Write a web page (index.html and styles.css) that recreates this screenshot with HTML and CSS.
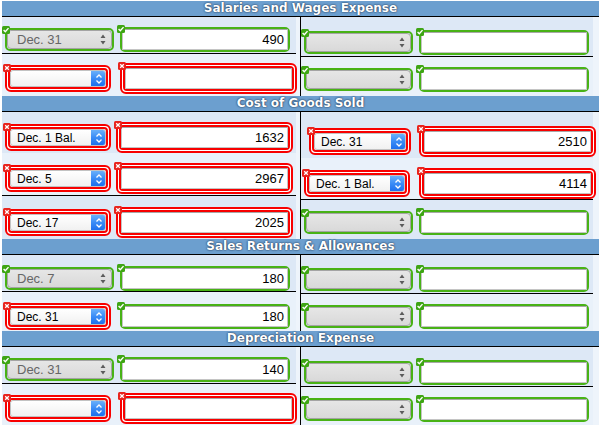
FILE: index.html
```html
<!DOCTYPE html>
<html>
<head>
<meta charset="utf-8">
<link rel="stylesheet" href="styles.css">
</head>
<body>
<div class="page">

  <section class="acct">
    <div class="hd">Salaries and Wages Expense</div>
    <div class="body">
      <div class="half left">
        <div class="row odd h36 pt10"><div class="line">
          <div class="ca"><div class="ok"><svg class="ico" viewBox="0 0 8 8"><rect width="8" height="8" rx="1.5" fill="#3ea514"/><path d="M1.6 4.1 L3.3 5.8 L6.5 2.1" stroke="#fff" stroke-width="1.4" fill="none"/></svg><div class="sel dis"><span>Dec. 31</span><svg class="ud" viewBox="0 0 6 11"><path d="M3 0.5 L5.5 4 L0.5 4 Z M0.5 7 L5.5 7 L3 10.5 Z" fill="#5c5c5c"/></svg></div></div></div>
          <div class="cb"><div class="ok"><svg class="ico" viewBox="0 0 8 8"><rect width="8" height="8" rx="1.5" fill="#3ea514"/><path d="M1.6 4.1 L3.3 5.8 L6.5 2.1" stroke="#fff" stroke-width="1.4" fill="none"/></svg><div class="inp">490</div></div></div>
        </div></div>
        <div class="rule"></div>
        <div class="row even h42 pt9"><div class="line">
          <div class="ca"><div class="bad"><svg class="ico" viewBox="0 0 8 8"><rect width="8" height="8" rx="1.5" fill="#e8231c"/><path d="M2.2 2.2 L5.8 5.8 M5.8 2.2 L2.2 5.8" stroke="#fff" stroke-width="1.3"/></svg><div class="ring"><div class="sel en"><span></span><span class="btn"><svg viewBox="0 0 8 12"><path d="M1.5 4.5 L4 2 L6.5 4.5 M1.5 7.5 L4 10 L6.5 7.5" stroke="#fff" stroke-width="1.3" fill="none"/></svg></span></div></div></div></div>
          <div class="cb"><div class="bad"><svg class="ico" viewBox="0 0 8 8"><rect width="8" height="8" rx="1.5" fill="#e8231c"/><path d="M2.2 2.2 L5.8 5.8 M5.8 2.2 L2.2 5.8" stroke="#fff" stroke-width="1.3"/></svg><div class="ring"><div class="inp"></div></div></div></div>
        </div></div>
      </div>
      <div class="half right">
        <div class="row odd h39 pt13"><div class="line">
          <div class="ca"><div class="ok"><svg class="ico" viewBox="0 0 8 8"><rect width="8" height="8" rx="1.5" fill="#3ea514"/><path d="M1.6 4.1 L3.3 5.8 L6.5 2.1" stroke="#fff" stroke-width="1.4" fill="none"/></svg><div class="sel dis"><span></span><svg class="ud" viewBox="0 0 6 11"><path d="M3 0.5 L5.5 4 L0.5 4 Z M0.5 7 L5.5 7 L3 10.5 Z" fill="#5c5c5c"/></svg></div></div></div>
          <div class="cb"><div class="ok"><svg class="ico" viewBox="0 0 8 8"><rect width="8" height="8" rx="1.5" fill="#3ea514"/><path d="M1.6 4.1 L3.3 5.8 L6.5 2.1" stroke="#fff" stroke-width="1.4" fill="none"/></svg><div class="inp"></div></div></div>
        </div></div>
        <div class="rule"></div>
        <div class="row even h39 pt10"><div class="line">
          <div class="ca"><div class="ok"><svg class="ico" viewBox="0 0 8 8"><rect width="8" height="8" rx="1.5" fill="#3ea514"/><path d="M1.6 4.1 L3.3 5.8 L6.5 2.1" stroke="#fff" stroke-width="1.4" fill="none"/></svg><div class="sel dis"><span></span><svg class="ud" viewBox="0 0 6 11"><path d="M3 0.5 L5.5 4 L0.5 4 Z M0.5 7 L5.5 7 L3 10.5 Z" fill="#5c5c5c"/></svg></div></div></div>
          <div class="cb"><div class="ok"><svg class="ico" viewBox="0 0 8 8"><rect width="8" height="8" rx="1.5" fill="#3ea514"/><path d="M1.6 4.1 L3.3 5.8 L6.5 2.1" stroke="#fff" stroke-width="1.4" fill="none"/></svg><div class="inp"></div></div></div>
        </div></div>
      </div>
    </div>
  </section>

  <section class="acct">
    <div class="hd">Cost of Goods Sold</div>
    <div class="body">
      <div class="half left narrow">
        <div class="row odd h41 pt10"><div class="line">
          <div class="ca"><div class="bad"><svg class="ico" viewBox="0 0 8 8"><rect width="8" height="8" rx="1.5" fill="#e8231c"/><path d="M2.2 2.2 L5.8 5.8 M5.8 2.2 L2.2 5.8" stroke="#fff" stroke-width="1.3"/></svg><div class="ring"><div class="sel en"><span>Dec. 1 Bal.</span><span class="btn"><svg viewBox="0 0 8 12"><path d="M1.5 4.5 L4 2 L6.5 4.5 M1.5 7.5 L4 10 L6.5 7.5" stroke="#fff" stroke-width="1.3" fill="none"/></svg></span></div></div></div></div>
          <div class="cb"><div class="bad"><svg class="ico" viewBox="0 0 8 8"><rect width="8" height="8" rx="1.5" fill="#e8231c"/><path d="M2.2 2.2 L5.8 5.8 M5.8 2.2 L2.2 5.8" stroke="#fff" stroke-width="1.3"/></svg><div class="ring"><div class="inp">1632</div></div></div></div>
        </div></div>
        <div class="row even h42 pt10"><div class="line">
          <div class="ca"><div class="bad"><svg class="ico" viewBox="0 0 8 8"><rect width="8" height="8" rx="1.5" fill="#e8231c"/><path d="M2.2 2.2 L5.8 5.8 M5.8 2.2 L2.2 5.8" stroke="#fff" stroke-width="1.3"/></svg><div class="ring"><div class="sel en"><span>Dec. 5</span><span class="btn"><svg viewBox="0 0 8 12"><path d="M1.5 4.5 L4 2 L6.5 4.5 M1.5 7.5 L4 10 L6.5 7.5" stroke="#fff" stroke-width="1.3" fill="none"/></svg></span></div></div></div></div>
          <div class="cb"><div class="bad"><svg class="ico" viewBox="0 0 8 8"><rect width="8" height="8" rx="1.5" fill="#e8231c"/><path d="M2.2 2.2 L5.8 5.8 M5.8 2.2 L2.2 5.8" stroke="#fff" stroke-width="1.3"/></svg><div class="ring"><div class="inp">2967</div></div></div></div>
        </div></div>
        <div class="rule"></div>
        <div class="row odd h43 pt11"><div class="line">
          <div class="ca"><div class="bad"><svg class="ico" viewBox="0 0 8 8"><rect width="8" height="8" rx="1.5" fill="#e8231c"/><path d="M2.2 2.2 L5.8 5.8 M5.8 2.2 L2.2 5.8" stroke="#fff" stroke-width="1.3"/></svg><div class="ring"><div class="sel en"><span>Dec. 17</span><span class="btn"><svg viewBox="0 0 8 12"><path d="M1.5 4.5 L4 2 L6.5 4.5 M1.5 7.5 L4 10 L6.5 7.5" stroke="#fff" stroke-width="1.3" fill="none"/></svg></span></div></div></div></div>
          <div class="cb"><div class="bad"><svg class="ico" viewBox="0 0 8 8"><rect width="8" height="8" rx="1.5" fill="#e8231c"/><path d="M2.2 2.2 L5.8 5.8 M5.8 2.2 L2.2 5.8" stroke="#fff" stroke-width="1.3"/></svg><div class="ring"><div class="inp">2025</div></div></div></div>
        </div></div>
      </div>
      <div class="half right">
        <div class="row odd h46 pt14"><div class="line">
          <div class="ca"><div class="bad short"><svg class="ico" viewBox="0 0 8 8"><rect width="8" height="8" rx="1.5" fill="#e8231c"/><path d="M2.2 2.2 L5.8 5.8 M5.8 2.2 L2.2 5.8" stroke="#fff" stroke-width="1.3"/></svg><div class="ring"><div class="sel en"><span>Dec. 31</span><span class="btn"><svg viewBox="0 0 8 12"><path d="M1.5 4.5 L4 2 L6.5 4.5 M1.5 7.5 L4 10 L6.5 7.5" stroke="#fff" stroke-width="1.3" fill="none"/></svg></span></div></div></div></div>
          <div class="cb"><div class="bad"><svg class="ico" viewBox="0 0 8 8"><rect width="8" height="8" rx="1.5" fill="#e8231c"/><path d="M2.2 2.2 L5.8 5.8 M5.8 2.2 L2.2 5.8" stroke="#fff" stroke-width="1.3"/></svg><div class="ring"><div class="inp">2510</div></div></div></div>
        </div></div>
        <div class="row even h41 pt10"><div class="line">
          <div class="ca"><div class="bad"><svg class="ico" viewBox="0 0 8 8"><rect width="8" height="8" rx="1.5" fill="#e8231c"/><path d="M2.2 2.2 L5.8 5.8 M5.8 2.2 L2.2 5.8" stroke="#fff" stroke-width="1.3"/></svg><div class="ring"><div class="sel en"><span>Dec. 1 Bal.</span><span class="btn"><svg viewBox="0 0 8 12"><path d="M1.5 4.5 L4 2 L6.5 4.5 M1.5 7.5 L4 10 L6.5 7.5" stroke="#fff" stroke-width="1.3" fill="none"/></svg></span></div></div></div></div>
          <div class="cb"><div class="bad"><svg class="ico" viewBox="0 0 8 8"><rect width="8" height="8" rx="1.5" fill="#e8231c"/><path d="M2.2 2.2 L5.8 5.8 M5.8 2.2 L2.2 5.8" stroke="#fff" stroke-width="1.3"/></svg><div class="ring"><div class="inp">4114</div></div></div></div>
        </div></div>
        <div class="rule"></div>
        <div class="row odd h39 pt10"><div class="line">
          <div class="ca"><div class="ok"><svg class="ico" viewBox="0 0 8 8"><rect width="8" height="8" rx="1.5" fill="#3ea514"/><path d="M1.6 4.1 L3.3 5.8 L6.5 2.1" stroke="#fff" stroke-width="1.4" fill="none"/></svg><div class="sel dis"><span></span><svg class="ud" viewBox="0 0 6 11"><path d="M3 0.5 L5.5 4 L0.5 4 Z M0.5 7 L5.5 7 L3 10.5 Z" fill="#5c5c5c"/></svg></div></div></div>
          <div class="cb"><div class="ok"><svg class="ico" viewBox="0 0 8 8"><rect width="8" height="8" rx="1.5" fill="#3ea514"/><path d="M1.6 4.1 L3.3 5.8 L6.5 2.1" stroke="#fff" stroke-width="1.4" fill="none"/></svg><div class="inp"></div></div></div>
        </div></div>
      </div>
    </div>
  </section>

  <section class="acct">
    <div class="hd">Sales Returns &amp; Allowances</div>
    <div class="body">
      <div class="half left">
        <div class="row odd h36 pt11"><div class="line">
          <div class="ca"><div class="ok"><svg class="ico" viewBox="0 0 8 8"><rect width="8" height="8" rx="1.5" fill="#3ea514"/><path d="M1.6 4.1 L3.3 5.8 L6.5 2.1" stroke="#fff" stroke-width="1.4" fill="none"/></svg><div class="sel dis"><span>Dec. 7</span><svg class="ud" viewBox="0 0 6 11"><path d="M3 0.5 L5.5 4 L0.5 4 Z M0.5 7 L5.5 7 L3 10.5 Z" fill="#5c5c5c"/></svg></div></div></div>
          <div class="cb"><div class="ok"><svg class="ico" viewBox="0 0 8 8"><rect width="8" height="8" rx="1.5" fill="#3ea514"/><path d="M1.6 4.1 L3.3 5.8 L6.5 2.1" stroke="#fff" stroke-width="1.4" fill="none"/></svg><div class="inp">180</div></div></div>
        </div></div>
        <div class="rule"></div>
        <div class="row even h39 pt11"><div class="line">
          <div class="ca"><div class="bad"><svg class="ico" viewBox="0 0 8 8"><rect width="8" height="8" rx="1.5" fill="#e8231c"/><path d="M2.2 2.2 L5.8 5.8 M5.8 2.2 L2.2 5.8" stroke="#fff" stroke-width="1.3"/></svg><div class="ring"><div class="sel en"><span>Dec. 31</span><span class="btn"><svg viewBox="0 0 8 12"><path d="M1.5 4.5 L4 2 L6.5 4.5 M1.5 7.5 L4 10 L6.5 7.5" stroke="#fff" stroke-width="1.3" fill="none"/></svg></span></div></div></div></div>
          <div class="cb"><div class="ok"><svg class="ico" viewBox="0 0 8 8"><rect width="8" height="8" rx="1.5" fill="#3ea514"/><path d="M1.6 4.1 L3.3 5.8 L6.5 2.1" stroke="#fff" stroke-width="1.4" fill="none"/></svg><div class="inp">180</div></div></div>
        </div></div>
      </div>
      <div class="half right">
        <div class="row odd h38 pt12"><div class="line">
          <div class="ca"><div class="ok"><svg class="ico" viewBox="0 0 8 8"><rect width="8" height="8" rx="1.5" fill="#3ea514"/><path d="M1.6 4.1 L3.3 5.8 L6.5 2.1" stroke="#fff" stroke-width="1.4" fill="none"/></svg><div class="sel dis"><span></span><svg class="ud" viewBox="0 0 6 11"><path d="M3 0.5 L5.5 4 L0.5 4 Z M0.5 7 L5.5 7 L3 10.5 Z" fill="#5c5c5c"/></svg></div></div></div>
          <div class="cb"><div class="ok"><svg class="ico" viewBox="0 0 8 8"><rect width="8" height="8" rx="1.5" fill="#3ea514"/><path d="M1.6 4.1 L3.3 5.8 L6.5 2.1" stroke="#fff" stroke-width="1.4" fill="none"/></svg><div class="inp"></div></div></div>
        </div></div>
        <div class="rule"></div>
        <div class="row even h37 pt10"><div class="line">
          <div class="ca"><div class="ok"><svg class="ico" viewBox="0 0 8 8"><rect width="8" height="8" rx="1.5" fill="#3ea514"/><path d="M1.6 4.1 L3.3 5.8 L6.5 2.1" stroke="#fff" stroke-width="1.4" fill="none"/></svg><div class="sel dis"><span></span><svg class="ud" viewBox="0 0 6 11"><path d="M3 0.5 L5.5 4 L0.5 4 Z M0.5 7 L5.5 7 L3 10.5 Z" fill="#5c5c5c"/></svg></div></div></div>
          <div class="cb"><div class="ok"><svg class="ico" viewBox="0 0 8 8"><rect width="8" height="8" rx="1.5" fill="#3ea514"/><path d="M1.6 4.1 L3.3 5.8 L6.5 2.1" stroke="#fff" stroke-width="1.4" fill="none"/></svg><div class="inp"></div></div></div>
        </div></div>
      </div>
    </div>
  </section>

  <section class="acct">
    <div class="hd">Depreciation Expense</div>
    <div class="body">
      <div class="half left">
        <div class="row odd h36 pt10"><div class="line">
          <div class="ca"><div class="ok"><svg class="ico" viewBox="0 0 8 8"><rect width="8" height="8" rx="1.5" fill="#3ea514"/><path d="M1.6 4.1 L3.3 5.8 L6.5 2.1" stroke="#fff" stroke-width="1.4" fill="none"/></svg><div class="sel dis"><span>Dec. 31</span><svg class="ud" viewBox="0 0 6 11"><path d="M3 0.5 L5.5 4 L0.5 4 Z M0.5 7 L5.5 7 L3 10.5 Z" fill="#5c5c5c"/></svg></div></div></div>
          <div class="cb"><div class="ok"><svg class="ico" viewBox="0 0 8 8"><rect width="8" height="8" rx="1.5" fill="#3ea514"/><path d="M1.6 4.1 L3.3 5.8 L6.5 2.1" stroke="#fff" stroke-width="1.4" fill="none"/></svg><div class="inp">140</div></div></div>
        </div></div>
        <div class="rule"></div>
        <div class="row even h42 pt9"><div class="line">
          <div class="ca"><div class="bad"><svg class="ico" viewBox="0 0 8 8"><rect width="8" height="8" rx="1.5" fill="#e8231c"/><path d="M2.2 2.2 L5.8 5.8 M5.8 2.2 L2.2 5.8" stroke="#fff" stroke-width="1.3"/></svg><div class="ring"><div class="sel en"><span></span><span class="btn"><svg viewBox="0 0 8 12"><path d="M1.5 4.5 L4 2 L6.5 4.5 M1.5 7.5 L4 10 L6.5 7.5" stroke="#fff" stroke-width="1.3" fill="none"/></svg></span></div></div></div></div>
          <div class="cb"><div class="bad"><svg class="ico" viewBox="0 0 8 8"><rect width="8" height="8" rx="1.5" fill="#e8231c"/><path d="M2.2 2.2 L5.8 5.8 M5.8 2.2 L2.2 5.8" stroke="#fff" stroke-width="1.3"/></svg><div class="ring"><div class="inp"></div></div></div></div>
        </div></div>
      </div>
      <div class="half right">
        <div class="row odd h39 pt13"><div class="line">
          <div class="ca"><div class="ok"><svg class="ico" viewBox="0 0 8 8"><rect width="8" height="8" rx="1.5" fill="#3ea514"/><path d="M1.6 4.1 L3.3 5.8 L6.5 2.1" stroke="#fff" stroke-width="1.4" fill="none"/></svg><div class="sel dis"><span></span><svg class="ud" viewBox="0 0 6 11"><path d="M3 0.5 L5.5 4 L0.5 4 Z M0.5 7 L5.5 7 L3 10.5 Z" fill="#5c5c5c"/></svg></div></div></div>
          <div class="cb"><div class="ok"><svg class="ico" viewBox="0 0 8 8"><rect width="8" height="8" rx="1.5" fill="#3ea514"/><path d="M1.6 4.1 L3.3 5.8 L6.5 2.1" stroke="#fff" stroke-width="1.4" fill="none"/></svg><div class="inp"></div></div></div>
        </div></div>
        <div class="rule"></div>
        <div class="row even h39 pt10"><div class="line">
          <div class="ca"><div class="ok"><svg class="ico" viewBox="0 0 8 8"><rect width="8" height="8" rx="1.5" fill="#3ea514"/><path d="M1.6 4.1 L3.3 5.8 L6.5 2.1" stroke="#fff" stroke-width="1.4" fill="none"/></svg><div class="sel dis"><span></span><svg class="ud" viewBox="0 0 6 11"><path d="M3 0.5 L5.5 4 L0.5 4 Z M0.5 7 L5.5 7 L3 10.5 Z" fill="#5c5c5c"/></svg></div></div></div>
          <div class="cb"><div class="ok"><svg class="ico" viewBox="0 0 8 8"><rect width="8" height="8" rx="1.5" fill="#3ea514"/><path d="M1.6 4.1 L3.3 5.8 L6.5 2.1" stroke="#fff" stroke-width="1.4" fill="none"/></svg><div class="inp"></div></div></div>
        </div></div>
      </div>
    </div>
  </section>

</div>
</body>
</html>
```

FILE: styles.css
```css
* { box-sizing: border-box; }
html, body { margin: 0; padding: 0; background: #fff; }
body { font-family: "Liberation Sans", Arial, sans-serif; color: #000; }

.page { width: 599px; padding: 1px 0 0 2px; }

.acct { width: 597px; }

.hd {
  height: 16px;
  line-height: 15px;
  background: #6c9fcf;
  border-bottom: 1px solid #000;
  color: #fff;
  text-align: center;
  font-family: "DejaVu Sans", Verdana, sans-serif;
  font-weight: bold;
  font-size: 12px;
  text-shadow: 0 0 2px rgba(20, 35, 60, 0.9), 0 0 1px rgba(20, 35, 60, 0.6);
}

.body { display: flex; }

.half { background: #eef4fb; width: 298px; display: flex; flex-direction: column; }
.half.left { padding-right: 4px; }
.half.right { width: 299px; border-left: 1px solid #000; padding-right: 6px; }

.row { padding-left: 3px; }
.row.odd { background: #dde8f6; }
.row.even { background: #e9f1fa; }

.h36 { height: 36px; } .h37 { height: 37px; } .h38 { height: 38px; }
.h39 { height: 39px; } .h41 { height: 41px; } .h42 { height: 42px; }
.h43 { height: 43px; } .h46 { height: 46px; }
.pt9 { padding-top: 9px; } .pt10 { padding-top: 10px; } .pt11 { padding-top: 11px; }
.pt12 { padding-top: 12px; } .pt13 { padding-top: 13px; } .pt14 { padding-top: 14px; }

.rule { height: 1px; background: #000; }

.line { display: flex; align-items: center; }
.ca { width: 115px; flex: none; display: flex; }
.narrow .ca { width: 111px; }
.cb { flex: none; display: flex; }

/* validation wrappers */
.ok {
  position: relative;
  display: flex;
  border: 2px solid #48b216;
  border-radius: 5px;
}
.bad {
  position: relative;
  display: flex;
  border: 2px solid #f80000;
  border-radius: 6px;
  padding: 1px;
  background: #fff;
}
.ring { display: flex; border: 2px solid #f80000; border-radius: 4px; }
.ico { position: absolute; width: 8px; height: 8px; left: -5px; top: -4px; z-index: 2; }
.bad > .ico { left: -4px; top: -3px; }
.bad.short { margin-left: 5px; }

/* selects */
.sel { display: flex; align-items: center; justify-content: space-between; }
.sel.dis {
  width: 105px; height: 19px;
  border: 1px solid #a4a4a4;
  border-radius: 4px;
  background: linear-gradient(#e6e6e6, #d9d9d9);
  color: #666;
  font-size: 13px;
  padding: 0 5px 0 9px;
}
.ud { width: 6px; height: 11px; }
.sel.en {
  width: 96px; height: 17px;
  border: 1px solid #c2c2c2;
  border-radius: 3px;
  background: linear-gradient(#ffffff, #f1f1f1);
  font-size: 12px;
  padding-left: 6px;
  overflow: hidden;
}
.bad.short .sel.en { width: 92px; }
.btn {
  width: 15px; height: 17px;
  margin: -1px -1px -1px 0;
  border-radius: 0 3px 3px 0;
  background: linear-gradient(#70b5fb, #3a8cf6 50%, #1a6cec);
  display: flex; align-items: center; justify-content: center;
}
.btn svg { width: 8px; height: 12px; }

/* text inputs */
.inp {
  width: 166px; height: 21px;
  background: #fff;
  border: 1px solid #c4c4c4;
  border-top-color: #a8a8a8;
  text-align: right;
  padding-right: 3px;
  font-size: 13px;
  line-height: 19px;
}
.ring .inp { width: 167px; }
```
